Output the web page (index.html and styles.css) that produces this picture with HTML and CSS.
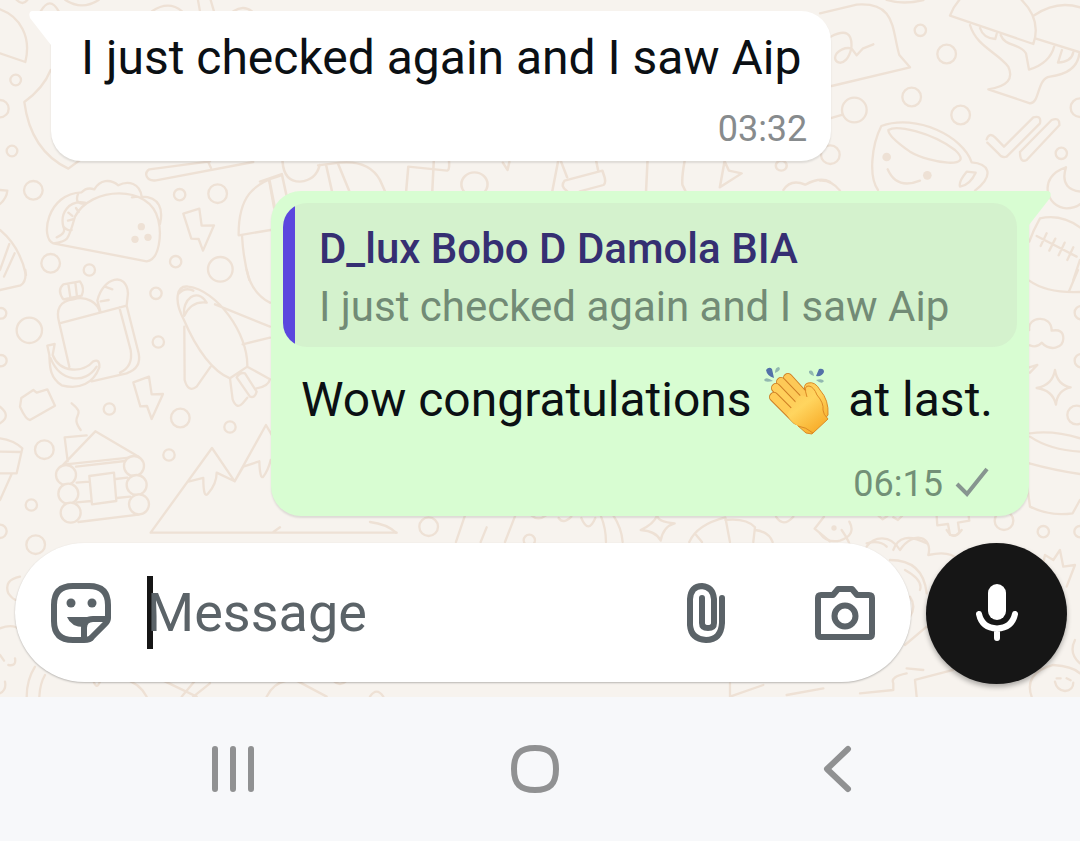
FILE: index.html
```html
<!DOCTYPE html>
<html lang="en">
<head>
<meta charset="utf-8">
<meta name="viewport" content="width=device-width, initial-scale=1">
<title>Chat</title>
<link rel="stylesheet" href="styles.css">
</head>
<body>
<main class="chat">
  <svg class="wallpaper" viewBox="0 0 1080 697" preserveAspectRatio="xMinYMin slice" aria-hidden="true">
    <g transform="scale(.3333)">
      <path d="M0 28C60 50 95 110 76 186L0 160M152 210Q130 265 73 306C85 400 130 470 205 506L240 480M0 300a26 26 0 0 1 0 52M50 0q18 18 32 0M122 34q28-48 54 0M196 0q50 32 100 0M456 34q50-34 90 0M594 0l6 34M632 0l10 34M700 34q30-20 56 0"/>
      <circle cx="47" cy="240" r="16"/><circle cx="36" cy="453" r="16"/><circle cx="100" cy="571" r="28"/><circle cx="152" cy="790" r="28"/><circle cx="268" cy="810" r="17"/><circle cx="539" cy="584" r="17"/><circle cx="653" cy="581" r="28"/><circle cx="527" cy="785" r="17"/><circle cx="661" cy="808" r="37"/>
      <path d="M0 570l22 2Q20 595 0 612M0 690Q60 740 78 825M0 810l28-78M12 830l32-70M160 730C120 715 140 580 245 577Q260 560 283 568C300 540 330 535 355 556C385 540 420 550 425 590C480 590 490 630 480 672M160 730L440 784C480 780 485 700 475 660C450 550 270 560 225 650C205 720 205 725 160 730ZM235 580Q220 615 260 610M255 608C205 600 180 640 190 680Q200 700 170 712M190 680Q205 695 215 690M412 590l-16 2M205 638l12 10M228 624l8 12M204 662l14-4"/>
      <path d="M550 641L598 626L605 677L642 676L609 752L596 717L574 716ZM630 484L448 508C430 520 440 545 468 541L760 486M625 486l8 18M840 528C760 550 715 590 716 706L812 690M808 545l14 78M726 706Q730 780 748 840"/>
      <g class="dot"><circle cx="424" cy="680" r="11"/><circle cx="405" cy="718" r="11"/><circle cx="444" cy="712" r="11"/></g>
    </g>
    <g transform="translate(0 270) scale(.3333)">
      <circle cx="3" cy="130" r="16"/><circle cx="88" cy="181" r="38"/><circle cx="3" cy="272" r="17"/><circle cx="468" cy="70" r="17"/><circle cx="475" cy="216" r="17"/><circle cx="328" cy="417" r="17"/><circle cx="541" cy="444" r="28"/><circle cx="690" cy="471" r="17"/><circle cx="133" cy="539" r="28"/><circle cx="507" cy="555" r="17"/><circle cx="94" cy="705" r="17"/><circle cx="107" cy="824" r="28"/><circle cx="0" cy="784" r="20"/><path d="M0 410q35 28 0 50M0 60l62-14Q80 35 76 0M740 0Q755 70 810 98"/>
      <path d="M178 160Q160 95 220 88C260 75 295 100 300 128M178 160L380 107M178 160L208 290M275 334L380 310Q425 295 416 250L380 107M358 112L392 240Q400 290 360 308M292 92C310 20 380 5 384 70L380 107M292 92l10 35M315 50l22 8M302 94l24-4M190 88Q170 60 190 43L240 34Q255 55 245 77ZM205 42l6 40M226 38l5 42M142 227L164 222L158 255C180 310 250 310 280 274Q300 265 298 292C280 340 240 360 185 346C145 320 150 280 148 255ZM152 265C180 335 255 345 290 290"/>
      <path d="M400 337L447 320L455 373L489 372L455 447L441 408L421 409ZM60 410L64 384L100 360L110 368L142 358L165 407L90 450Q78 450 60 410ZM215 400C265 440 205 430 242 480"/>
      <path d="M552 150C520 90 530 45 565 50C650 60 745 190 742 290L690 325C640 305 590 240 552 150ZM553 137C545 90 590 50 620 98Q575 92 553 137ZM535 72Q555 50 580 62M645 103L810 170M728 223L810 203M553 170L554 330Q565 370 590 350L632 290M742 290L810 328Q805 350 770 355M690 325L698 388Q710 420 728 400L742 383M710 322Q720 305 735 310L770 365Q765 385 750 380Z"/>
      <path d="M0 505Q40 510 67 535L50 610H0M0 545L60 546M35 612L0 690M203 574L194 502L260 496M190 584L286 484L416 560L190 584M228 590L375 573M230 638L268 635M347 627L382 623M230 697L275 693M350 684L390 680M235 756L416 734M268 618L342 608L349 693L276 703Z"/>
      <g class="log"><circle cx="198" cy="615" r="30"/><circle cx="205" cy="671" r="30"/><circle cx="212" cy="728" r="30"/><circle cx="402" cy="588" r="30"/><circle cx="410" cy="645" r="30"/><circle cx="417" cy="703" r="30"/></g>
      <path d="M452 788L636 534L704 634L798 465L830 520M565 635L610 624Q610 690 625 670Q650 640 650 608L704 634L730 590L778 574Q780 630 790 620Q805 600 812 570M452 788H1190M820 786l20-14"/>
    </g>
    <g transform="translate(820) scale(.3333)">
      <path d="M0 40L110 14C230 5 215 90 238 165L270 202L35 258M32 110Q100 75 94 145L110 166L128 146L160 133M94 145C80 210 30 190 50 160Q70 140 94 145M35 354L68 344M200 0q50 15 110 0M418 0Q400 20 390 47L640 132Q665 60 605 0M643 46Q710 0 780 22M648 116L780 157M450 75C470 140 530 155 565 200Q590 255 505 268L630 310C660 310 650 235 690 230Q770 220 778 162M480 84Q490 115 526 117L530 102M542 105C555 140 600 130 618 160L627 209Q690 190 703 138M726 150L714 188Q755 185 760 157M500 418Q508 395 526 413L552 440L640 352Q665 345 660 370L560 470Q545 475 535 460L502 428M600 456L695 360Q720 350 718 376L620 480Q600 490 600 456"/>
      <circle cx="103" cy="330" r="37"/><circle cx="31" cy="464" r="28"/><circle cx="301" cy="91" r="17"/><circle cx="380" cy="162" r="28"/><circle cx="275" cy="291" r="28"/><circle cx="422" cy="345" r="28"/><circle cx="724" cy="460" r="17"/><circle cx="780" cy="323" r="28"/>
      <path d="M174 570C145 530 155 435 184 378C290 340 430 410 455 487C500 490 530 520 465 572M205 390C230 375 330 395 405 450C470 510 330 490 270 455Q205 410 205 390ZM203 508Q230 570 300 542M440 515L467 518Q450 555 420 560Q415 545 440 515ZM0 542Q35 540 60 572M738 502C650 530 680 625 740 625Q780 625 800 590M738 502Q715 575 800 576M628 725Q640 690 660 655Q730 640 790 690M780 780L760 840M650 708L770 770M680 700l-18 38M706 716l-18 36M734 728l-18 38M760 742l-18 38"/>
      <g class="dot"><circle cx="200" cy="471" r="13"/><circle cx="322" cy="526" r="13"/></g>
    </g>
    <g transform="translate(820 270) scale(.3333)">
      <path d="M628 32Q680 70 780 66M774 0L748 62M630 226Q650 235 665 218C690 245 730 235 730 205Q730 175 695 182C695 130 620 140 628 180M628 292L652 285L630 308M705 300Q712 345 752 352Q712 360 708 404Q698 360 650 354Q698 345 705 300ZM630 490Q700 480 780 505M630 500Q690 540 780 545M628 580Q700 600 780 612M622 650L630 710Q690 740 758 730L780 690M0 790Q20 820 60 812Q110 795 88 755M176 738l12 10l14-10M220 742l14 8l12-12M350 738L352 766L384 762L390 795Q410 800 418 786L414 758L448 752L446 738M140 820q40-10 60 10M220 840Q240 780 320 820"/>
      <circle cx="552" cy="752" r="28"/><circle cx="670" cy="785" r="17"/><circle cx="780" cy="785" r="17"/><circle cx="770" cy="435" r="28"/><circle cx="784" cy="128" r="20"/><circle cx="784" cy="272" r="20"/><g class="dot"><circle cx="42" cy="774" r="8"/></g>
    </g>
    <g transform="translate(370 508) scale(.3333)">
      <path d="M0 42Q50 48 78 74M285 22L258 102M350 58L332 102M436 22L405 102M484 22Q505 40 528 22M566 30Q580 50 604 26M634 30Q655 80 676 30M692 22Q708 60 708 102M730 22Q755 60 758 102M862 22Q862 42 914 46Q880 55 872 98Q860 70 812 66Q850 50 862 22M958 102Q980 50 1066 28L1080 102M1066 36Q1130 30 1155 58L1150 102M1155 66Q1195 70 1208 102M978 80L996 102M1218 26Q1240 60 1270 26M1362 26L1334 62L1380 100"/>
      <circle cx="176" cy="56" r="28"/><circle cx="478" cy="97" r="17"/>
    </g>
    <g transform="translate(0 530) scale(.3333)">
      <path d="M60 140Q10 150 25 190Q40 210 50 210M0 295Q40 280 60 300M0 375L12 392M25 405q25 5 20-20M0 490q20-10 15-35M80 500Q80 450 105 410M118 500Q120 460 135 435M280 452q10 30 20 2M370 445Q420 460 440 500M490 452L590 500M545 500L585 452M580 500L630 460M800 500Q820 460 860 452M890 452L980 500M1110 500Q1130 470 1150 500M1000 452q20 20 40 0"/>
    </g>
    <g transform="translate(660 530) scale(.3333)">
      <path d="M545 0Q580 50 570 70M620 50C640 20 690 10 720 60C760 0 820 20 805 75Q870 60 895 90M690 90Q790 90 800 190M735 120Q790 150 780 180M750 200q20 30 0 60M735 345L800 290M740 415L790 420M1150 100L1155 75L1180 90L1200 60L1210 110L1245 105L1220 170M1245 330q-20 40 15 70M210 460V500L310 465M380 495L490 475M600 490L700 480V460Q690 440 740 430M770 500L765 450L880 420M1115 500Q1090 430 1180 405Q1240 410 1260 430M1185 455q5 25 30 28q25-3 25-25M1190 445h12M1220 445l12 6M860 0q20 35 45 0"/>
    </g>
    <g transform="translate(260 150) scale(.3635 .3333)">
      <path d="M0 95L60 72L74 142M26 90L42 180M62 34Q66 95 110 95Q155 90 164 45M160 46L220 38Q300 30 330 90L344 124M182 46L198 124M215 42L246 124M402 124L408 50L515 62Q522 60 520 34M478 34L474 124M668 38L681 60L686 36M820 34L804 124M828 34L845 82M925 34L930 60M880 124L945 105Q952 100 948 82L942 62L838 92Q825 110 845 124M1066 34L1062 124M1168 34Q1160 80 1162 104L1170 122M1278 34L1265 112L1325 70L1290 62L1278 34M1440 120Q1460 85 1500 104Q1540 80 1568 95"/>
      <circle cx="590" cy="103" r="36"/><circle cx="1434" cy="47" r="15"/>
    </g>
  </svg>

  <section class="messages" aria-label="Messages">
    <article class="bubble bubble-in">
      <svg class="tail tail-in" viewBox="0 0 22 34" aria-hidden="true"><path d="M22 0H3Q-1 1 1 7L22 34Z"/></svg>
      <p class="text">I just checked again and I saw Aip</p>
      <footer class="meta"><time>03:32</time></footer>
    </article>

    <article class="bubble bubble-out">
      <svg class="tail tail-out" viewBox="0 0 22 34" aria-hidden="true"><path d="M0 0H19Q23 1 21 7L0 34Z"/></svg>
      <blockquote class="quote">
        <cite class="quote-name">D_lux Bobo D Damola BIA</cite>
        <p class="quote-text">I just checked again and I saw Aip</p>
      </blockquote>
      <p class="text">Wow congratulations
        <svg class="clap" viewBox="0 0 72 72" role="img" aria-label="Clapping hands">
          <defs>
            <linearGradient id="skin" gradientUnits="userSpaceOnUse" x1="18" y1="14" x2="58" y2="66"><stop offset="0" stop-color="#fbc152"/><stop offset=".5" stop-color="#ffd55f"/><stop offset="1" stop-color="#f7a823"/></linearGradient>
          </defs>
          <path fill="#5371a8" d="M3 3q3-4 6-1l2 9q-7-2-8-8zM53 9l3-7q5-1 5 3q-2 5-8 4z"/>
          <path fill="#92b8b0" d="M12 6q0-6 4-6q3 3-4 6zM10 14q-8 2-9-1q2-4 9 1zM51 9q-6-2-5-5q4-2 5 5zM53 13q6-2 8 1q-2 4-8-1z"/>
          <path fill="url(#skin)" stroke="#dc8a25" d="M43 28Q39 17 45 16Q52 14 57 23Q66 33 65 48L49 67L43 66L34 58Z"/>
          <g stroke-linecap="round">
            <path stroke="#cf7f24" stroke-width="10" d="M25 11L44 32"/><path stroke="#fdc957" stroke-width="8" d="M25 11L44 32"/>
            <path stroke="#cf7f24" stroke-width="10" d="M18 15L40 38"/><path stroke="#fdc957" stroke-width="8" d="M18 15L40 38"/>
            <path stroke="#cf7f24" stroke-width="10" d="M13 21L36 45"/><path stroke="#ffcf5b" stroke-width="8" d="M13 21L36 45"/>
            <path stroke="#cf7f24" stroke-width="10" d="M11 30L34 53"/><path stroke="#ffcc56" stroke-width="8" d="M11 30L34 53"/>
          </g>
          <path fill="url(#skin)" d="M26 44L32 36L34 31L38 28L44 30Q40 18 46 19Q51 20 54 28Q61 36 60 43Q60 47 65 52L50 66Q43 60 35 59Q29 56 24 48Z"/>
          <path fill="none" stroke="#dc8a25" d="M44 30Q40 18 46 19Q51 20 54 28Q61 36 60 43Q60 47 65 52L50 66Q43 60 35 59"/>
        </svg>
        at last.</p>
      <footer class="meta"><time>06:15</time>
        <svg class="tick" viewBox="0 0 34 32" role="img" aria-label="Sent"><path d="M2 18L12 28L32 3"/></svg>
      </footer>
    </article>
  </section>

  <form class="composer">
    <div class="field">
      <button class="icon-button" type="button" aria-label="Stickers">
        <svg class="icon" viewBox="0 0 60 60"><path class="line" d="M36 57H22Q3 57 3 38V22Q3 3 22 3H38Q57 3 57 22V35Q57 38 54 41L41 54Q39 57 33 57V45Q33 36 42 36H56"/><circle cx="20" cy="20" r="4.500"/><circle cx="41" cy="20" r="4.500"/><path d="M16 34H40L33 44Q20 44 16 34Z"/></svg>
      </button>
      <div class="entry">
        <span class="caret" aria-hidden="true"></span>
        <input class="message-input" type="text" placeholder="Message" aria-label="Message">
      </div>
      <button class="icon-button" type="button" aria-label="Attach">
        <svg class="icon" viewBox="0 0 60 60"><path class="line round" d="M45 15V40Q44 57 29 57Q14 56 13 42V16Q14 3 25 3Q36 4 37 16V40Q37 45 31 45Q25 45 25 40V15"/></svg>
      </button>
      <button class="icon-button camera" type="button" aria-label="Camera">
        <svg class="icon" viewBox="0 0 60 60"><path class="line" d="M3 15Q3 12 6 12H18L23 6H37L42 12H54Q57 12 57 15V51Q57 54 54 54H6Q3 54 3 51Z"/><circle class="line" cx="30" cy="33" r="10.500"/></svg>
      </button>
    </div>
    <button class="mic" type="button" aria-label="Record voice message">
      <svg class="icon" viewBox="0 0 60 60"><rect x="21" y="0" width="18" height="36" rx="9"/><path class="line round" d="M12 30Q15 44 30 44.500Q45 44 48 30M30 45V54"/></svg>
    </button>
  </form>
</main>

<nav class="system-nav" aria-label="System">
  <button class="nav-button" type="button" aria-label="Recent apps"><svg class="nav-icon" viewBox="0 0 50 50"><path d="M6 5V45M24 5V45M42 5V45"/></svg></button>
  <button class="nav-button" type="button" aria-label="Home"><svg class="nav-icon" viewBox="0 0 50 50"><path d="M24 4C39 4 45 10 45 25S39 46 24 46S3 40 3 25S9 4 24 4Z"/></svg></button>
  <button class="nav-button" type="button" aria-label="Back"><svg class="nav-icon" viewBox="0 0 50 50"><path d="M35 5L14 25L35 45"/></svg></button>
</nav>
</body>
</html>
```

FILE: styles.css
```css
* {
  box-sizing: border-box;
}

body {
  margin: 0;
  min-height: 100vh;
  display: flex;
  flex-direction: column;
  background: #f7f8fa;
  font-family: Roboto, "Liberation Sans", sans-serif;
}

p,
blockquote {
  margin: 0;
}

button {
  padding: 0;
  border: 0;
  background: none;
  display: flex;
  align-items: center;
  justify-content: center;
}

.chat {
  position: relative;
  flex: 1;
  display: flex;
  flex-direction: column;
  justify-content: space-between;
  padding: 11px 13px 13px 15px;
  overflow: hidden;
  background: #f7f3ee;
}

.wallpaper {
  position: absolute;
  inset: 0;
  width: 100%;
  height: 100%;
  fill: none;
  stroke: #eee1d5;
  stroke-width: 7;
  stroke-linecap: round;
  stroke-linejoin: round;
}

.wallpaper .dot {
  fill: #eee1d5;
  stroke: none;
}

.wallpaper .log {
  fill: #f7f3ee;
}

.messages {
  position: relative;
  display: flex;
  flex-direction: column;
  gap: 30px;
  padding: 0 38px 0 36px;
}

.bubble {
  position: relative;
  border-radius: 30px;
  box-shadow: 0 2px 2px rgba(0, 0, 0, 0.1);
}

.bubble-in {
  align-self: flex-start;
  padding: 19px 24px 11px 30px;
  background: #ffffff;
  border-top-left-radius: 0;
}

.bubble-out {
  align-self: flex-end;
  padding: 12px 12px 11px;
  background: #d8fdd2;
  border-top-right-radius: 0;
}

.tail {
  position: absolute;
  top: 0;
  width: 22px;
  height: 34px;
}

.tail-in {
  right: 100%;
  fill: #ffffff;
}

.tail-out {
  left: 100%;
  fill: #d8fdd2;
}

.text {
  padding-right: 6px;
  font-size: 48px;
  line-height: 56px;
  color: #0b1014;
}

.bubble-out .text {
  padding: 25px 24px 0 18px;
}

.meta {
  display: flex;
  align-items: center;
  justify-content: flex-end;
  gap: 12px;
  padding-top: 22px;
  font-size: 36px;
  line-height: 42px;
  color: #878b8d;
}

.bubble-out .meta {
  padding: 32px 28px 0 0;
  color: #729077;
}

.tick {
  width: 34px;
  height: 32px;
  margin-top: -5px;
  fill: none;
  stroke: #879590;
  stroke-width: 4;
}

.clap {
  width: 72px;
  height: 72px;
  margin: -8px 1px -8px 0;
  vertical-align: middle;
}

.quote {
  padding: 17px 24px 11px 36px;
  border-radius: 24px;
  background: linear-gradient(to right, #5b47de 12px, #d4f2cd 12px);
  font-size: 42px;
  line-height: 58px;
}

.quote-name {
  display: block;
  font-style: normal;
  font-weight: 500;
  color: #352f72;
}

.quote-text {
  color: #728b76;
}

.composer {
  position: relative;
  display: flex;
  align-items: flex-start;
  gap: 15px;
}

.field {
  flex: 1;
  min-width: 0;
  height: 139px;
  display: flex;
  align-items: center;
  padding: 0 36px;
  border-radius: 70px;
  background: #ffffff;
  box-shadow: 0 1px 2px rgba(0, 0, 0, 0.25);
}

.icon-button {
  flex: none;
  color: #5b6368;
}

.camera {
  margin-left: 78px;
}

.icon {
  width: 60px;
  height: 60px;
  fill: currentColor;
}

.icon .line {
  fill: none;
  stroke: currentColor;
  stroke-width: 6;
  stroke-linejoin: round;
}

.icon .round {
  stroke-linecap: round;
}

.entry {
  position: relative;
  flex: 1;
  min-width: 0;
  display: flex;
  align-items: center;
  margin-left: 36px;
}

.caret {
  position: absolute;
  left: 0;
  width: 6px;
  height: 73px;
  background: #161616;
}

.message-input {
  position: relative;
  width: 100%;
  height: 76px;
  padding: 0;
  border: 0;
  outline: 0;
  background: transparent;
  font: 54px/64px Roboto, "Liberation Sans", sans-serif;
  color: #0b1014;
}

.message-input::placeholder {
  color: #5b6368;
  opacity: 1;
}

.mic {
  flex: none;
  width: 141px;
  height: 141px;
  border-radius: 50%;
  background: #161616;
  color: #ffffff;
  box-shadow: 0 3px 5px rgba(0, 0, 0, 0.3);
}

.system-nav {
  display: flex;
  height: 144px;
  padding: 0 91px 0 83px;
}

.nav-button {
  flex: 1;
}

.nav-icon {
  width: 50px;
  height: 50px;
  fill: none;
  stroke: #909192;
  stroke-width: 6;
  stroke-linecap: round;
  stroke-linejoin: round;
}
```
